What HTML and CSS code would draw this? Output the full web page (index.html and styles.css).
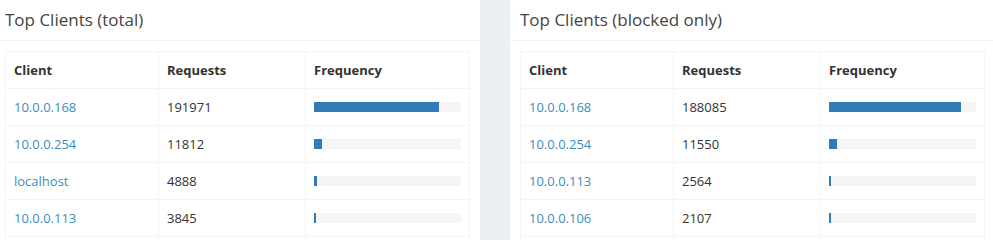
FILE: index.html
```html
<!DOCTYPE html>
<html>
<head>
<meta charset="utf-8">
<link rel="stylesheet" href="styles.css">
</head>
<body>
<div class="row">
  <div class="box">
    <div class="box-header"><h3 class="box-title">Top Clients (total)</h3></div>
    <div class="box-body">
      <table class="table">
        <tr><th class="c1">Client</th><th class="c2">Requests</th><th>Frequency</th></tr>
        <tr><td><a>10.0.0.168</a></td><td>191971</td><td><div class="progress"><div class="bar" style="width:85.1%"></div></div></td></tr>
        <tr><td><a>10.0.0.254</a></td><td>11812</td><td><div class="progress"><div class="bar" style="width:5.4%"></div></div></td></tr>
        <tr><td><a>localhost</a></td><td>4888</td><td><div class="progress"><div class="bar" style="width:2.2%"></div></div></td></tr>
        <tr><td><a>10.0.0.113</a></td><td>3845</td><td><div class="progress"><div class="bar" style="width:1.7%"></div></div></td></tr>
        <tr class="empty"><td></td><td></td><td></td></tr>
      </table>
    </div>
  </div>
  <div class="box">
    <div class="box-header"><h3 class="box-title">Top Clients (blocked only)</h3></div>
    <div class="box-body">
      <table class="table">
        <tr><th class="c1">Client</th><th class="c2">Requests</th><th>Frequency</th></tr>
        <tr><td><a>10.0.0.168</a></td><td>188085</td><td><div class="progress"><div class="bar" style="width:90%"></div></div></td></tr>
        <tr><td><a>10.0.0.254</a></td><td>11550</td><td><div class="progress"><div class="bar" style="width:5.5%"></div></div></td></tr>
        <tr><td><a>10.0.0.113</a></td><td>2564</td><td><div class="progress"><div class="bar" style="width:1.2%"></div></div></td></tr>
        <tr><td><a>10.0.0.106</a></td><td>2107</td><td><div class="progress"><div class="bar" style="width:1%"></div></div></td></tr>
        <tr class="empty"><td></td><td></td><td></td></tr>
      </table>
    </div>
  </div>
</div>
</body>
</html>
```
FILE: styles.css
```css
html, body {
  margin: 0;
  padding: 0;
  background: #ecf0f5;
  overflow: hidden;
}
body {
  font-family: "Open Sans", "Lato", sans-serif;
  font-size: 13px;
  line-height: 20px;
  color: #333;
}
.row {
  display: flex;
  gap: 30px;
  margin-left: -5px;
}
.box {
  width: 485px;
  flex: none;
  background: #fff;
}
.box-header {
  padding: 10px;
  border-bottom: 1px solid #f4f4f4;
}
.box-title {
  margin: 0;
  font-size: 17px;
  font-weight: 400;
  line-height: 20px;
  color: #444;
}
.box-body {
  padding: 10px;
}
.table {
  width: 100%;
  border-collapse: collapse;
  border: 1px solid #f4f4f4;
}
.table th, .table td {
  border: 1px solid #f4f4f4;
  padding: 8px;
  text-align: left;
  vertical-align: top;
  line-height: 20px;
}
.table th {
  font-weight: 700;
  color: #333;
}
.empty td {
  height: 20px;
}
.c1 { width: 136px; }
.c2 { width: 130px; }
.table a {
  color: #3c8dbc;
  text-decoration: none;
}
.progress {
  height: 10px;
  margin: 5px 0;
  background: #f5f5f5;
}
.bar {
  height: 100%;
  min-width: 2px;
  background: #337ab7;
}
```
